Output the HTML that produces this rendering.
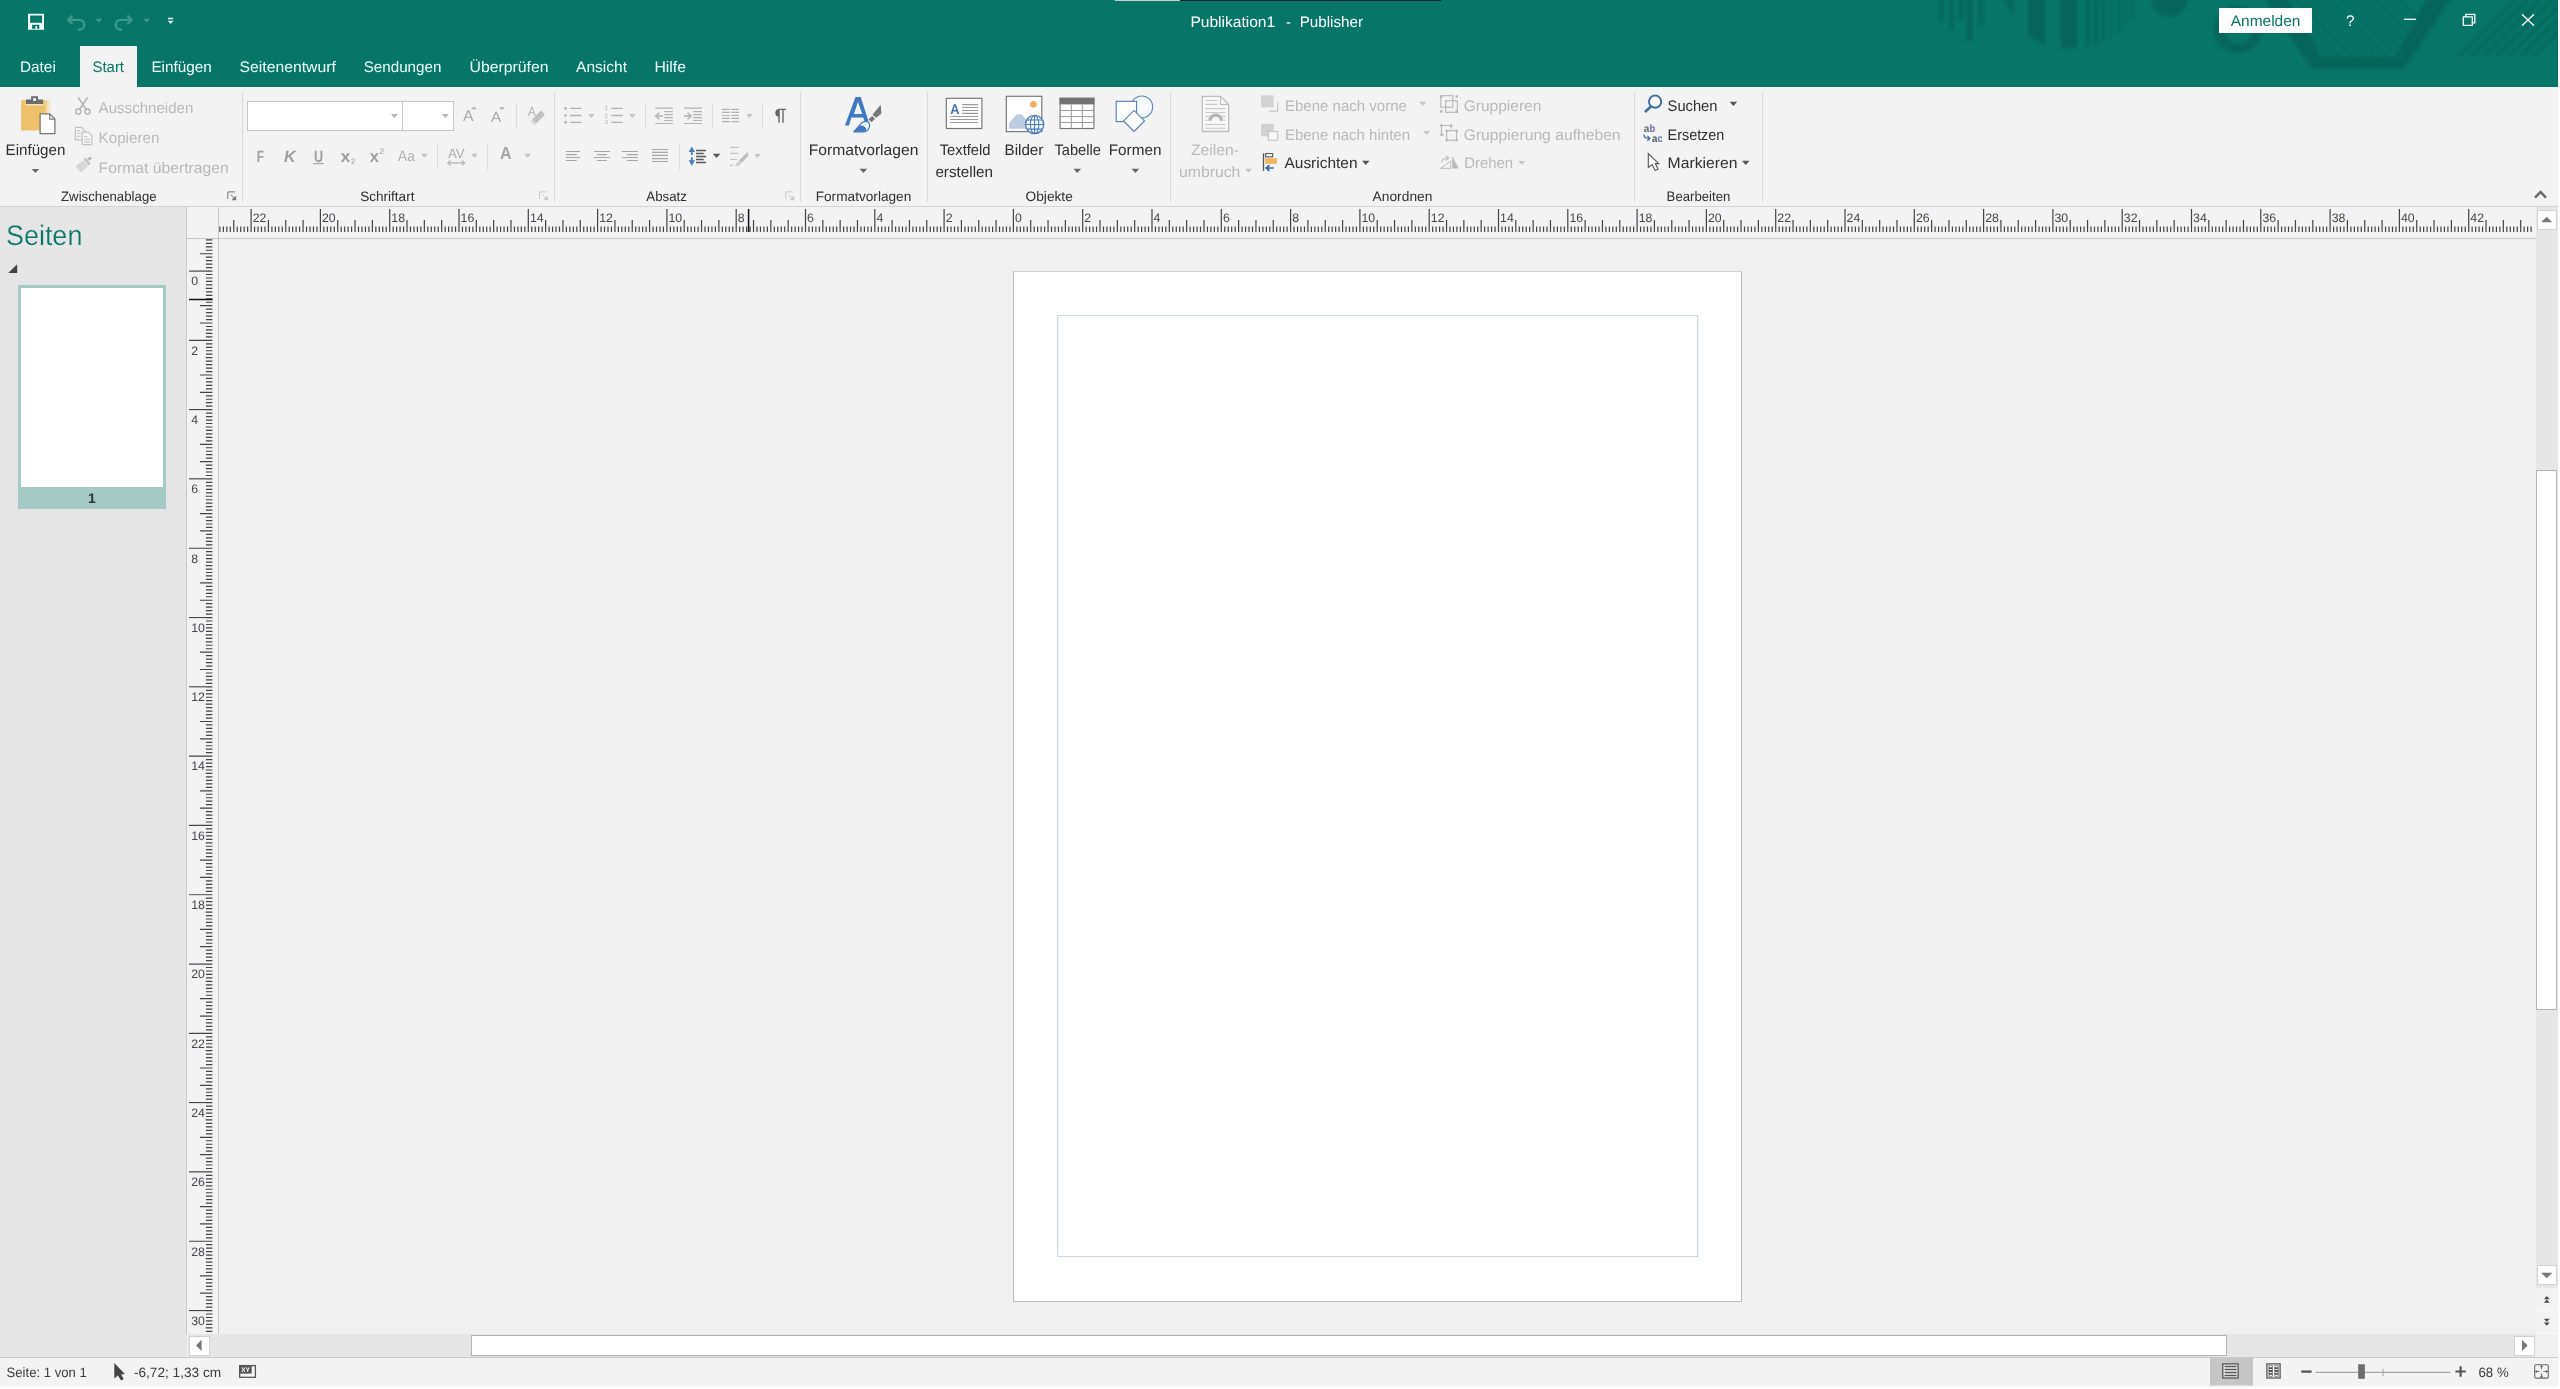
<!DOCTYPE html>
<html lang="de"><head><meta charset="utf-8"><title>Publikation1 - Publisher</title>
<style>
html,body{margin:0;padding:0;}
body{width:2560px;height:1389px;overflow:hidden;background:#fdfdfd;font-family:"Liberation Sans",sans-serif;position:relative;}
#app{position:absolute;left:0;top:0;width:2558px;height:1387px;overflow:hidden;background:#f0f0f0;}
.t{position:absolute;white-space:pre;line-height:1;transform-origin:0 0;}
.abs{position:absolute;}
svg{position:absolute;overflow:visible;}
#titlebar{position:absolute;left:0;top:0;width:2558px;height:87px;background:#077568;overflow:hidden;}
#ribbon{position:absolute;left:0;top:87px;width:2558px;height:119px;background:#f3f3f3;border-bottom:1px solid #d4d4d4;}
.gsep{position:absolute;top:92px;width:1.3px;height:110px;background:#d9d9d9;}
.ssep{position:absolute;width:1.3px;background:#dcdcdc;}
#pages{position:absolute;left:0;top:207px;width:187px;height:1150px;background:#e6e6e6;}
#status{position:absolute;left:0;top:1357px;width:2558px;height:30px;background:linear-gradient(#f3f3f3 0,#f3f3f3 27.3px,#fdfdfd 30px);border-top:1px solid #c9c9c9;box-sizing:border-box;}
.sbtn{position:absolute;background:#fff;border:1px solid #d2d2d2;box-sizing:border-box;}
</style></head><body><div id="app">

<div id="titlebar">
<svg width="2558" height="1387" viewBox="0 0 2558 1387" style="left:0;top:0;filter:blur(1.6px)"><rect x="1938.5" y="-2" width="5.3" height="22" fill="rgba(0,0,0,0.10)"/><rect x="1949.8" y="-2" width="4.0" height="32.5" fill="rgba(0,0,0,0.10)"/><rect x="1958.4" y="-2" width="5.3" height="22" fill="rgba(0,0,0,0.10)"/><rect x="1966.4" y="-2" width="6.0" height="43" fill="rgba(0,0,0,0.10)"/><rect x="1978" y="-2" width="5.7" height="27" fill="rgba(0,0,0,0.10)"/><path d="M2003 -2 L2014 -2 L2014 17 Z" fill="rgba(0,0,0,0.10)"/><path d="M2028 -2 H2044.8 V44.5 L2028 36 Z" fill="rgba(0,0,0,0.13)"/><path d="M2060.7 -2 H2077.3 V48.5 H2060.7 Z" fill="rgba(0,0,0,0.13)"/><rect x="2086" y="-2" width="4.0" height="48" fill="rgba(0,0,0,0.10)"/><rect x="2094" y="-2" width="4.0" height="47" fill="rgba(0,0,0,0.10)"/><rect x="2102" y="-2" width="3.0" height="42" fill="rgba(0,0,0,0.10)"/><rect x="2110" y="-2" width="2.5" height="39" fill="rgba(0,0,0,0.10)"/><rect x="2118" y="-2" width="2.5" height="34" fill="rgba(0,0,0,0.10)"/><rect x="2124.5" y="-2" width="2.5" height="27" fill="rgba(0,0,0,0.10)"/><rect x="2131" y="-2" width="2.0" height="20.6" fill="rgba(0,0,0,0.10)"/><circle cx="2169.6" cy="-2" r="18.6" fill="rgba(0,0,0,0.12)"/><circle cx="2238" cy="29.4" r="19" fill="none" stroke="rgba(0,0,0,0.12)" stroke-width="10"/><polygon points="2263,-3 2312.5,69 2404,69 2452,-3 2428,-3 2395,57 2321,57 2287,-3" fill="rgba(0,0,0,0.13)"/><defs><clipPath id="hexin"><polygon points="2287,-3 2321,57 2395,57 2428,-3"/></clipPath></defs><g clip-path="url(#hexin)"><path d="M2267.2 -3 l70 70 l5.7 0 l-70 -70 z" fill="rgba(0,0,0,0.06)"/><path d="M2278.6 -3 l70 70 l5.7 0 l-70 -70 z" fill="rgba(0,0,0,0.06)"/><path d="M2290.0 -3 l70 70 l5.7 0 l-70 -70 z" fill="rgba(0,0,0,0.06)"/><path d="M2301.4 -3 l70 70 l5.7 0 l-70 -70 z" fill="rgba(0,0,0,0.06)"/><path d="M2312.8 -3 l70 70 l5.7 0 l-70 -70 z" fill="rgba(0,0,0,0.06)"/><path d="M2324.2 -3 l70 70 l5.7 0 l-70 -70 z" fill="rgba(0,0,0,0.06)"/><path d="M2335.6 -3 l70 70 l5.7 0 l-70 -70 z" fill="rgba(0,0,0,0.06)"/><path d="M2347.0 -3 l70 70 l5.7 0 l-70 -70 z" fill="rgba(0,0,0,0.06)"/><path d="M2358.4 -3 l70 70 l5.7 0 l-70 -70 z" fill="rgba(0,0,0,0.06)"/><path d="M2369.8 -3 l70 70 l5.7 0 l-70 -70 z" fill="rgba(0,0,0,0.06)"/><path d="M2381.2 -3 l70 70 l5.7 0 l-70 -70 z" fill="rgba(0,0,0,0.06)"/><path d="M2392.6 -3 l70 70 l5.7 0 l-70 -70 z" fill="rgba(0,0,0,0.06)"/></g><path d="M2520.0 -2 l-58 58 l-6.5 0 l58 -58 z" fill="rgba(0,0,0,0.085)"/><path d="M2532.5 -2 l-58 58 l-6.5 0 l58 -58 z" fill="rgba(0,0,0,0.085)"/><path d="M2545.0 -2 l-58 58 l-6.5 0 l58 -58 z" fill="rgba(0,0,0,0.085)"/><path d="M2557.5 -2 l-58 58 l-6.5 0 l58 -58 z" fill="rgba(0,0,0,0.085)"/><path d="M2570.0 -2 l-58 58 l-6.5 0 l58 -58 z" fill="rgba(0,0,0,0.085)"/><path d="M2582.5 -2 l-58 58 l-6.5 0 l58 -58 z" fill="rgba(0,0,0,0.085)"/><path d="M2595.0 -2 l-58 58 l-6.5 0 l58 -58 z" fill="rgba(0,0,0,0.085)"/></svg>
<div class="abs" style="left:1115px;top:0;width:65px;height:1.2px;background:#c9cdd0"></div>
<div class="abs" style="left:1180px;top:0;width:261px;height:1.2px;background:#14222e"></div>
<div class="abs" id="starttab" style="left:80px;top:46px;width:57px;height:41px;background:#f3f3f3"></div>
<svg style="left:0;top:0" width="2558" height="1387" viewBox="0 0 2558 1387" ><path d="M28 13.8 H44 V29.8 H28 Z M30.1 15.4 V22.7 H42.1 V15.4 Z M32.1 24.8 V28.7 H35.5 V26 H37.1 V28.7 H39.3 V24.8 Z" fill="#f2fffc" fill-rule="evenodd"/><path d="M72.4 15.6 L68 19.8 L72.4 24 M68.4 19.8 H79.4 a4.9 4.9 0 0 1 0 9.8 H78" fill="none" stroke="#3c998b" stroke-width="2.2"/><path d="M95.3 18.8 h7 l-3.5 4 z" fill="#3c998b"/><path d="M127.4 15.6 L131.8 19.8 L127.4 24 M131.4 19.8 H120.6 a4.9 4.9 0 0 0 0 9.8 H122" fill="none" stroke="#3c998b" stroke-width="2.2"/><path d="M143.1 18.8 h7 l-3.5 4 z" fill="#3c998b"/><path d="M168 17.7 h5 v1.5 h-5z M167.8 20.7 h5.6 l-2.8 3.3z" fill="#f2fffc"/></svg>



<div class="abs" style="left:2219px;top:7.7px;width:93px;height:25.5px;background:#fff"></div>


<svg style="left:0;top:0" width="2558" height="1387" viewBox="0 0 2558 1387" ><path d="M2404 19.3 H2416" stroke="#fff" stroke-width="1.3" fill="none"/><path d="M2463.3 16.9 H2472.3 V25.4 H2463.3 Z M2465.8 16.9 V14.4 H2474.8 V22.9 H2472.3" stroke="#fff" stroke-width="1.3" fill="none"/><path d="M2522 14.2 L2534 25.8 M2534 14.2 L2522 25.8" stroke="#fff" stroke-width="1.3" fill="none"/></svg>








</div>
<div id="ribbon"></div>
<div class="gsep" style="left:241.9px"></div>
<div class="gsep" style="left:553.8px"></div>
<div class="gsep" style="left:799.9px"></div>
<div class="gsep" style="left:926.9px"></div>
<div class="gsep" style="left:1170.0px"></div>
<div class="gsep" style="left:1633.8px"></div>
<div class="gsep" style="left:1761.9px"></div>
<div class="ssep" style="left:516.0px;top:102.6px;height:26.5px"></div>
<div class="ssep" style="left:644.9px;top:102.6px;height:26.5px"></div>
<div class="ssep" style="left:712.1px;top:102.6px;height:26.5px"></div>
<div class="ssep" style="left:761.8px;top:102.6px;height:26.5px"></div>
<div class="ssep" style="left:437.0px;top:144px;height:25.6px"></div>
<div class="ssep" style="left:486.9px;top:144px;height:25.6px"></div>
<div class="ssep" style="left:678.7px;top:144px;height:25.6px"></div>




























<div class="abs" style="left:247px;top:101px;width:156px;height:29.5px;background:#fff;border:1.2px solid #c6c6c6;box-sizing:border-box"></div>
<div class="abs" style="left:402px;top:101px;width:52px;height:29.5px;background:#fff;border:1.2px solid #c6c6c6;box-sizing:border-box"></div>
<svg style="left:0;top:0" width="2558" height="1387" viewBox="0 0 2558 1387" ><defs><linearGradient id="pg" x1="0" x2="1" y1="0" y2="0"><stop offset="0" stop-color="#eec16a"/><stop offset="0.78" stop-color="#eec16a"/><stop offset="1" stop-color="#f6dcae" stop-opacity="0.2"/></linearGradient></defs><rect x="21.1" y="100.1" width="29.7" height="30.4" fill="url(#pg)"/><path d="M26 99.4H31.1V96.2H38V99.4H43V104.2H26Z" fill="#6b6b72"/><rect x="33.2" y="98.2" width="2.8" height="2.6" fill="#fff"/><rect x="25.4" y="104.2" width="18.2" height="1" fill="#fbefd6"/><path d="M40.1 113.9H49.7L54.9 119.1V133.7H40.1Z" fill="#fff" stroke="#787878" stroke-width="1.3"/><path d="M49.7 113.9V119.1H54.9" fill="none" stroke="#787878" stroke-width="1.1"/><path d="M31.6 168.9 h7.6 l-3.8 4.2 z" fill="#666"/><circle cx="78.3" cy="111.6" r="2.6" fill="none" stroke="#b2b2b2" stroke-width="1.3"/><circle cx="87.4" cy="111.6" r="2.6" fill="none" stroke="#b2b2b2" stroke-width="1.3"/><path d="M78.2 97.4 L86.2 109.4 M87.6 97.4 L79.6 109.4" stroke="#b2b2b2" stroke-width="1.6" fill="none"/><path d="M75.3 127.4H81.3L84.6 130.7V132 M75.3 127.4V139.8H82" fill="none" stroke="#c2c2c2" stroke-width="1.2"/><path d="M82.2 132.2H88.4L91.9 135.7V144.7H82.2Z" fill="#f6f6f6" stroke="#c2c2c2" stroke-width="1.2"/><path d="M77 130.5H80 M77 133.3H80.5 M77 136.2H80.5 M84.2 136.5H87.5 M84.2 139.2H90 M84.2 141.9H90" stroke="#c2c2c2" stroke-width="1.1" fill="none"/><path d="M75.5 166.5 L83 160.2 L88 166.2 L81 172.3 Z" fill="#d6d6d6"/><path d="M83.6 159.6 L88.4 165.6 L90.6 163.8 L85.8 157.8 Z" fill="#c4c4c4"/><path d="M87.4 158.6 L90.2 156.4 L92 158.6 L89.2 160.8 Z" fill="#b2b2b2"/><path d="M235.0 191.9H227.8V198.9" fill="none" stroke="#777" stroke-width="1"/><path d="M230.4 194.5L234.8 198.9" fill="none" stroke="#777" stroke-width="1"/><path d="M236.2 195.5V200.3H231.4Z" fill="#777"/><path d="M390.9 114.0 h7 l-3.5 3.9 z" fill="#b4b4b4"/><path d="M441.9 114.0 h7 l-3.5 3.9 z" fill="#b4b4b4"/><path d="M470.9 109.2 h6 l-3 -2.8z" fill="#b2b2b2"/><path d="M499 107.2 h6 l-3 2.8z" fill="#b2b2b2"/><path d="M531.9 119.6 L541 110.5 L544.9 114.7 L535.8 123.8 Z" fill="#c0c0c0"/><path d="M531 120.8 L534.8 124.8" stroke="#c9c9c9" stroke-width="1.2"/><path d="M420.9 153.8 h7 l-3.5 3.9 z" fill="#c6c6c6"/><path d="M470.9 153.8 h7 l-3.5 3.9 z" fill="#c6c6c6"/><path d="M524.0 153.8 h7 l-3.5 3.9 z" fill="#c6c6c6"/><path d="M312.9 163.6H323.8" stroke="#a6a6a6" stroke-width="1.2"/><path d="M448 162.9H464.4 M450.6 160.4L447.8 162.9L450.6 165.4 M461.8 160.4L464.6 162.9L461.8 165.4" fill="none" stroke="#b2b2b2" stroke-width="1.2"/><path d="M546.8 191.9H539.6V198.9" fill="none" stroke="#c9c9c9" stroke-width="1"/><path d="M542.2 194.5L546.6 198.9" fill="none" stroke="#c9c9c9" stroke-width="1"/><path d="M548.0 195.5V200.3H543.2Z" fill="#c9c9c9"/><circle cx="565.5" cy="108.4" r="1.3" fill="#b2b2b2"/><circle cx="565.5" cy="115.5" r="1.3" fill="#b2b2b2"/><circle cx="565.5" cy="122.4" r="1.3" fill="#b2b2b2"/><path d="M570.1 108.4H581.7M570.1 115.5H581.7M570.1 122.4H581.7" stroke="#b2b2b2" stroke-width="1.3"/><path d="M587.9 114.0 h7 l-3.5 3.9 z" fill="#c6c6c6"/><path d="M611.3 108.4H622.9M611.3 115.5H622.9M611.3 122.4H622.9" stroke="#b2b2b2" stroke-width="1.3"/><path d="M628.9 114.0 h7 l-3.5 3.9 z" fill="#c6c6c6"/><path d="M655.2 108.2H672.8 M655.2 123.5H672.8 M664.4 111.7H672.8 M664.4 114.7H672.8 M664.4 117.6H672.8 M664.4 120.5H672.8" stroke="#b2b2b2" stroke-width="1.2"/><path d="M663 115.9H656.4 M659.4 112.6L655.8 115.9L659.4 119.2" stroke="#b8b8b8" stroke-width="1.7" fill="none"/><path d="M684 108.2H702 M684 123.5H702 M693.2 111.7H702 M693.2 114.7H702 M693.2 117.6H702 M693.2 120.5H702" stroke="#b2b2b2" stroke-width="1.2"/><path d="M684 115.9H690.6 M687.6 112.6L691.2 115.9L687.6 119.2" stroke="#b8b8b8" stroke-width="1.7" fill="none"/><path d="M722.0 109.4H729.8M731.2 109.4H738.9M722.0 112.3H729.8M731.2 112.3H738.9M722.0 115.5H729.8M731.2 115.5H738.9M722.0 118.4H729.8M731.2 118.4H738.9M722.0 121.6H729.8M731.2 121.6H738.9" stroke="#b2b2b2" stroke-width="1.2"/><path d="M746.0 114.0 h7 l-3.5 3.9 z" fill="#c6c6c6"/><path d="M779.2 108.9 A3.9 3.9 0 0 0 779.2 116.7 Z" fill="#666"/><path d="M778.4 109.4H786 M779 109V122.8 M783 109V122.8" stroke="#666" stroke-width="1.4" fill="none"/><path d="M565.9 151.5H580.0M565.9 154.6H576.8M565.9 157.5H580.0M565.9 160.5H576.8" stroke="#a8a8a8" stroke-width="1.2"/><path d="M594.0 151.5H609.9M597.0 154.6H607.0M594.0 157.5H609.9M597.0 160.5H607.0" stroke="#a8a8a8" stroke-width="1.2"/><path d="M621.8 151.5H638.0M627.1 154.6H638.0M621.8 157.5H638.0M627.1 160.5H638.0" stroke="#a8a8a8" stroke-width="1.2"/><path d="M652.0 149.5H667.9M652.0 152.4H667.9M652.0 155.4H667.9M652.0 158.6H667.9M652.0 161.5H667.9" stroke="#a8a8a8" stroke-width="1.2"/><path d="M691.8 146.6L688.6 152H690.9V154.9H692.7V152H695Z M691.8 165.8L688.6 160.2H690.9V157.2H692.7V160.2H695Z" fill="#4a7ebb"/><path d="M696.0 150.6H706.0M696.0 153.5H703.7M696.0 156.6H706.0M696.0 159.6H703.7M696.0 162.6H706.0" stroke="#595959" stroke-width="1.5"/><path d="M712.8 153.8 h7.5 l-3.8 4.2 z" fill="#555"/><path d="M730 147.3H739 M730 153.3H738.5 M730 159.5H737 M730 165.3H733" stroke="#c2c2c2" stroke-width="1.2"/><path d="M748 151.8 L748.2 156 L741.5 163 L738.8 160.6 Z" fill="#bdbdbd"/><path d="M738.4 161.2 L741 163.6 C739.5 165.6 736.5 166 734.4 165.8 C736.2 164.6 737 163 738.4 161.2Z" fill="#c6c6c6"/><path d="M754.0 154.0 h7 l-3.5 3.9 z" fill="#c6c6c6"/><path d="M793.0 191.9H785.8V198.9" fill="none" stroke="#c9c9c9" stroke-width="1"/><path d="M788.4 194.5L792.8 198.9" fill="none" stroke="#c9c9c9" stroke-width="1"/><path d="M794.2 195.5V200.3H789.4Z" fill="#c9c9c9"/><path d="M855.5 97H860.7L868.6 121.6L864.6 121.6L863.2 117.4H851.4L848.9 125.6H844.9Z M858 101.9L853.9 113.9H862.3Z" fill="#3f78bf" fill-rule="evenodd"/><path d="M880.7 104.8L881.3 113.8L876.2 117.7L872.4 114.8Z" fill="#777"/><path d="M868.5 119.3L872.1 115.9L875 118.8L871.4 122.2Z" fill="#777"/><path d="M853.9 131.8C858.4 127.6 859.6 123.4 863.4 121.8C866.4 120.6 869.2 122 869.6 124.6C870 127.6 867.6 131.8 863.8 131.8Z" fill="#f4f8fc" stroke="#3f78bf" stroke-width="1.2" stroke-linejoin="round"/><path d="M853.9 131.8C857 129 858.6 127 860.2 125.6C863.2 125.4 865.6 126.8 866.4 129.2C865.8 130.6 865 131.6 863.8 131.8Z" fill="#3f78bf"/><path d="M859.6 168.7 h7.6 l-3.8 4.2 z" fill="#666"/><rect x="946.3" y="98.3" width="35.6" height="30.2" fill="#fff" stroke="#757575" stroke-width="1.15"/><path d="M962.2 104.6H978 M962.2 107.5H978 M962.2 110.5H978 M962.2 113.4H978 M950.2 116.5H978 M950.2 119.5H978 M950.2 122.5H978" stroke="#9a9a9a" stroke-width="1.2"/><rect x="1006.3" y="96.3" width="35.5" height="35.3" fill="#fff" stroke="#757575" stroke-width="1.15"/><path d="M1009.1 128.7V123L1016.8 114.3H1021.4L1030 123.4V128.7Z" fill="#bccde2"/><path d="M1033.4 100.7l3.2 1.85v3.7l-3.2 1.85l-3.2 -1.85v-3.7z" fill="#f3ab62"/><circle cx="1034.6" cy="124.5" r="9.1" fill="#f1f6fc" stroke="#4a7ab4" stroke-width="1.3"/><ellipse cx="1034.6" cy="124.5" rx="4.2" ry="9.1" fill="none" stroke="#4a7ab4" stroke-width="1.05"/><path d="M1034.6 115.4V133.6 M1025.5 124.5H1043.7 M1027 119.9H1042.2 M1027 129.1H1042.2" stroke="#4a7ab4" stroke-width="1.05" fill="none"/><rect x="1060.1" y="98.3" width="33.8" height="30.2" fill="#fff" stroke="#757575" stroke-width="1.15"/><rect x="1059.6" y="97.8" width="34.8" height="6.6" fill="#727272"/><path d="M1071.3 104.4V128.5 M1082.3 104.4V128.5 M1060.1 110.5H1093.9 M1060.1 116.6H1093.9 M1060.1 122.5H1093.9" stroke="#9a9a9a" stroke-width="1"/><path d="M1073.5 168.7 h7.6 l-3.8 4.2 z" fill="#666"/><circle cx="1141.8" cy="106.9" r="10.9" fill="#f7fbff" stroke="#5b8ac6" stroke-width="1.05"/><rect x="1116.2" y="101.3" width="20.4" height="20.3" fill="#fbfdff" stroke="#4a78b0" stroke-width="1.05"/><path d="M1134 110.4L1144.5 120.9L1134 131.4L1123.5 120.9Z" fill="#fbfdff" stroke="#5578b0" stroke-width="1.05"/><path d="M1131.6 168.7 h7.6 l-3.8 4.2 z" fill="#666"/><path d="M1202.3 96.3H1220.5L1228.7 104.5V131.5H1202.3Z" fill="#f7f7f7" stroke="#bdbdbd" stroke-width="1.3"/><path d="M1220.5 96.3V104.5H1228.7" fill="none" stroke="#bdbdbd" stroke-width="1.1"/><path d="M1205.5 100.5H1217.5 M1205.5 104.4H1217.5 M1205.5 108.6H1225.4 M1205.5 112.5H1225.4 M1205.5 116.4H1225.4 M1205.5 120.2H1225.4 M1205.5 124.5H1225.4 M1205.5 128.3H1225.4" stroke="#c9c9c9" stroke-width="1.1"/><path d="M1207.6 121.2 A8.1 8.1 0 0 1 1223.8 121.2Z" fill="#f7f7f7"/><path d="M1208.3 120.8 A7.4 7.4 0 0 1 1223.1 120.8 H1219.7 A4 4 0 0 0 1211.7 120.8Z" fill="#b4b4b4"/><path d="M1245.0 168.7 h7 l-3.5 3.9 z" fill="#c6c6c6"/><path d="M1268.8 111.1H1277.6V102.6" fill="none" stroke="#c6c6c6" stroke-width="1.2"/><rect x="1261" y="95.3" width="12.7" height="11.9" fill="#d2d2d2"/><rect x="1261" y="123.8" width="12.7" height="12.6" fill="#d2d2d2"/><rect x="1268.4" y="131.5" width="9.2" height="8.8" fill="#f7f7f7" stroke="#c6c6c6" stroke-width="1.2"/><path d="M1419.3 101.8 h7 l-3.5 3.9 z" fill="#c6c6c6"/><path d="M1423.1 130.9 h7 l-3.5 3.9 z" fill="#c6c6c6"/><path d="M1263.5 153.3V170.9" stroke="#555" stroke-width="1.3"/><rect x="1265.6" y="153.6" width="7" height="3.2" fill="#fff" stroke="#555" stroke-width="1.1"/><rect x="1265.1" y="158.2" width="11.8" height="5.6" fill="#f0b55c"/><path d="M1273.7 168H1266.6 M1269.4 165.2L1266.2 168L1269.4 170.8" stroke="#3465a8" stroke-width="1.7" fill="none"/><path d="M1362.0 160.8 h7.5 l-3.8 4.2 z" fill="#555"/><rect x="1440.8" y="95.7" width="12" height="11.5" fill="none" stroke="#b4b4b4" stroke-width="1.1"/><rect x="1445.7" y="100.7" width="11.6" height="11.6" fill="none" stroke="#b4b4b4" stroke-width="1.1"/><rect x="1440.1" y="95.3" width="2.4" height="2.4" fill="#b4b4b4"/><rect x="1455.5" y="95.3" width="2.4" height="2.4" fill="#b4b4b4"/><rect x="1440.1" y="110.2" width="2.4" height="2.4" fill="#b4b4b4"/><rect x="1455.5" y="110.2" width="2.4" height="2.4" fill="#b4b4b4"/><path d="M1441.5 134.7V125.5H1451.2V128.5 M1441.5 134.7H1444" fill="none" stroke="#b4b4b4" stroke-width="1.1"/><rect x="1446.7" y="130.7" width="9.9" height="9.5" fill="none" stroke="#b4b4b4" stroke-width="1.1"/><circle cx="1441.5" cy="125.5" r="1.3" fill="#b4b4b4"/><circle cx="1451.2" cy="125.5" r="1.3" fill="#b4b4b4"/><circle cx="1441.5" cy="134.7" r="1.3" fill="#b4b4b4"/><circle cx="1446.7" cy="130.7" r="1.3" fill="#b4b4b4"/><circle cx="1456.6" cy="130.7" r="1.3" fill="#b4b4b4"/><circle cx="1446.7" cy="140.2" r="1.3" fill="#b4b4b4"/><circle cx="1456.6" cy="140.2" r="1.3" fill="#b4b4b4"/><path d="M1440.4 168.4H1450.6V161.3Z" fill="none" stroke="#c6c6c6" stroke-width="1.1"/><path d="M1452.2 156.1V168.4H1458.7Z" fill="#bcbcbc"/><path d="M1441.6 162.4C1441.6 159.6 1444 158 1447.6 158 M1445.8 155.8L1448.6 158L1445.8 160.2" fill="none" stroke="#bcbcbc" stroke-width="1.2"/><path d="M1518.3 161.0 h7 l-3.5 3.9 z" fill="#c6c6c6"/><circle cx="1655.1" cy="101.7" r="6.1" fill="#fbfdff" stroke="#41719f" stroke-width="2"/><path d="M1651 106.6L1644.9 111.9" stroke="#41719f" stroke-width="2.7" fill="none"/><path d="M1729.7 101.7 h7.5 l-3.8 4.2 z" fill="#555"/><path d="M1643.9 134.4C1643.9 137.6 1645.6 138.4 1649.6 138.4 M1647.4 136L1650 138.4L1647.4 140.8" fill="none" stroke="#3a68a8" stroke-width="1.2"/><path d="M1648.3 153.5V167.4L1652.2 164.5L1655.1 170.4L1658 168.9L1655.3 163.6H1658.7Z" fill="#fff" stroke="#555" stroke-width="1.1" stroke-linejoin="miter"/><path d="M1742.0 160.8 h7.5 l-3.8 4.2 z" fill="#555"/></svg>
<div id="pages"></div>

<svg style="left:0;top:0" width="200" height="300"><path d="M17.2 264.2 L17.2 273 L8.2 273 Z" fill="#444"/></svg>
<div class="abs" style="left:18px;top:285px;width:148px;height:223.5px;background:#a3cac5"></div>
<div class="abs" style="left:21.3px;top:288px;width:142px;height:199px;background:#fff"></div>

<div class="abs" style="left:187px;top:207px;width:2349px;height:31.5px;background:#f3f3f3;border-bottom:1.2px solid #c8c8c8;box-sizing:border-box"></div>
<div class="abs" style="left:186.3px;top:207px;width:32.7px;height:1127px;background:#f3f3f3;border-left:1.3px solid #c8c8c8;border-right:1.2px solid #c8c8c8;box-sizing:border-box"></div>
<div class="abs" style="left:186.3px;top:207px;width:32.7px;height:31.5px;border:1.3px solid #c8c8c8;border-top:none;box-sizing:border-box"></div>

<svg style="left:0;top:0" width="2558" height="1387" viewBox="0 0 2558 1387" ><path d="M219.91 226.4V232M223.38 226.4V232M226.85 226.4V232M230.31 226.4V232M233.77 220V232M237.24 226.4V232M240.71 226.4V232M244.17 226.4V232M247.63 226.4V232M251.10 209V232M254.57 226.4V232M258.03 226.4V232M261.50 226.4V232M264.96 226.4V232M268.42 220V232M271.89 226.4V232M275.36 226.4V232M278.82 226.4V232M282.28 226.4V232M285.75 220V232M289.22 226.4V232M292.68 226.4V232M296.14 226.4V232M299.61 226.4V232M303.08 220V232M306.54 226.4V232M310.00 226.4V232M313.47 226.4V232M316.94 226.4V232M320.40 209V232M323.87 226.4V232M327.33 226.4V232M330.79 226.4V232M334.26 226.4V232M337.73 220V232M341.19 226.4V232M344.65 226.4V232M348.12 226.4V232M351.59 226.4V232M355.05 220V232M358.51 226.4V232M361.98 226.4V232M365.45 226.4V232M368.91 226.4V232M372.38 220V232M375.84 226.4V232M379.30 226.4V232M382.77 226.4V232M386.24 226.4V232M389.70 209V232M393.16 226.4V232M396.63 226.4V232M400.10 226.4V232M403.56 226.4V232M407.02 220V232M410.49 226.4V232M413.96 226.4V232M417.42 226.4V232M420.88 226.4V232M424.35 220V232M427.82 226.4V232M431.28 226.4V232M434.75 226.4V232M438.21 226.4V232M441.67 220V232M445.14 226.4V232M448.61 226.4V232M452.07 226.4V232M455.53 226.4V232M459.00 209V232M462.47 226.4V232M465.93 226.4V232M469.39 226.4V232M472.86 226.4V232M476.33 220V232M479.79 226.4V232M483.25 226.4V232M486.72 226.4V232M490.18 226.4V232M493.65 220V232M497.12 226.4V232M500.58 226.4V232M504.05 226.4V232M507.51 226.4V232M510.98 220V232M514.44 226.4V232M517.90 226.4V232M521.37 226.4V232M524.84 226.4V232M528.30 209V232M531.76 226.4V232M535.23 226.4V232M538.69 226.4V232M542.16 226.4V232M545.62 220V232M549.09 226.4V232M552.56 226.4V232M556.02 226.4V232M559.49 226.4V232M562.95 220V232M566.41 226.4V232M569.88 226.4V232M573.35 226.4V232M576.81 226.4V232M580.27 220V232M583.74 226.4V232M587.20 226.4V232M590.67 226.4V232M594.13 226.4V232M597.60 209V232M601.07 226.4V232M604.53 226.4V232M608.00 226.4V232M611.46 226.4V232M614.92 220V232M618.39 226.4V232M621.86 226.4V232M625.32 226.4V232M628.78 226.4V232M632.25 220V232M635.71 226.4V232M639.18 226.4V232M642.64 226.4V232M646.11 226.4V232M649.58 220V232M653.04 226.4V232M656.50 226.4V232M659.97 226.4V232M663.43 226.4V232M666.90 209V232M670.37 226.4V232M673.83 226.4V232M677.30 226.4V232M680.76 226.4V232M684.22 220V232M687.69 226.4V232M691.15 226.4V232M694.62 226.4V232M698.09 226.4V232M701.55 220V232M705.01 226.4V232M708.48 226.4V232M711.94 226.4V232M715.41 226.4V232M718.88 220V232M722.34 226.4V232M725.81 226.4V232M729.27 226.4V232M732.74 226.4V232M736.20 209V232M739.66 226.4V232M743.13 226.4V232M746.60 226.4V232M750.06 226.4V232M753.52 220V232M756.99 226.4V232M760.45 226.4V232M763.92 226.4V232M767.38 226.4V232M770.85 220V232M774.32 226.4V232M777.78 226.4V232M781.25 226.4V232M784.71 226.4V232M788.17 220V232M791.64 226.4V232M795.11 226.4V232M798.57 226.4V232M802.03 226.4V232M805.50 209V232M808.96 226.4V232M812.43 226.4V232M815.89 226.4V232M819.36 226.4V232M822.83 220V232M826.29 226.4V232M829.75 226.4V232M833.22 226.4V232M836.68 226.4V232M840.15 220V232M843.62 226.4V232M847.08 226.4V232M850.54 226.4V232M854.01 226.4V232M857.48 220V232M860.94 226.4V232M864.40 226.4V232M867.87 226.4V232M871.34 226.4V232M874.80 209V232M878.26 226.4V232M881.73 226.4V232M885.19 226.4V232M888.66 226.4V232M892.12 220V232M895.59 226.4V232M899.05 226.4V232M902.52 226.4V232M905.99 226.4V232M909.45 220V232M912.91 226.4V232M916.38 226.4V232M919.85 226.4V232M923.31 226.4V232M926.77 220V232M930.24 226.4V232M933.70 226.4V232M937.17 226.4V232M940.63 226.4V232M944.10 209V232M947.56 226.4V232M951.03 226.4V232M954.50 226.4V232M957.96 226.4V232M961.42 220V232M964.89 226.4V232M968.36 226.4V232M971.82 226.4V232M975.28 226.4V232M978.75 220V232M982.22 226.4V232M985.68 226.4V232M989.14 226.4V232M992.61 226.4V232M996.07 220V232M999.54 226.4V232M1003.00 226.4V232M1006.47 226.4V232M1009.93 226.4V232M1013.40 209V232M1016.87 226.4V232M1020.33 226.4V232M1023.79 226.4V232M1027.26 226.4V232M1030.72 220V232M1034.19 226.4V232M1037.65 226.4V232M1041.12 226.4V232M1044.59 226.4V232M1048.05 220V232M1051.51 226.4V232M1054.98 226.4V232M1058.44 226.4V232M1061.91 226.4V232M1065.38 220V232M1068.84 226.4V232M1072.31 226.4V232M1075.77 226.4V232M1079.23 226.4V232M1082.70 209V232M1086.16 226.4V232M1089.63 226.4V232M1093.10 226.4V232M1096.56 226.4V232M1100.03 220V232M1103.49 226.4V232M1106.95 226.4V232M1110.42 226.4V232M1113.88 226.4V232M1117.35 220V232M1120.82 226.4V232M1124.28 226.4V232M1127.74 226.4V232M1131.21 226.4V232M1134.67 220V232M1138.14 226.4V232M1141.61 226.4V232M1145.07 226.4V232M1148.53 226.4V232M1152.00 209V232M1155.46 226.4V232M1158.93 226.4V232M1162.39 226.4V232M1165.86 226.4V232M1169.33 220V232M1172.79 226.4V232M1176.25 226.4V232M1179.72 226.4V232M1183.18 226.4V232M1186.65 220V232M1190.12 226.4V232M1193.58 226.4V232M1197.05 226.4V232M1200.51 226.4V232M1203.97 220V232M1207.44 226.4V232M1210.90 226.4V232M1214.37 226.4V232M1217.84 226.4V232M1221.30 209V232M1224.76 226.4V232M1228.23 226.4V232M1231.69 226.4V232M1235.16 226.4V232M1238.62 220V232M1242.09 226.4V232M1245.56 226.4V232M1249.02 226.4V232M1252.48 226.4V232M1255.95 220V232M1259.41 226.4V232M1262.88 226.4V232M1266.35 226.4V232M1269.81 226.4V232M1273.28 220V232M1276.74 226.4V232M1280.20 226.4V232M1283.67 226.4V232M1287.13 226.4V232M1290.60 209V232M1294.07 226.4V232M1297.53 226.4V232M1300.99 226.4V232M1304.46 226.4V232M1307.92 220V232M1311.39 226.4V232M1314.86 226.4V232M1318.32 226.4V232M1321.78 226.4V232M1325.25 220V232M1328.71 226.4V232M1332.18 226.4V232M1335.64 226.4V232M1339.11 226.4V232M1342.58 220V232M1346.04 226.4V232M1349.50 226.4V232M1352.97 226.4V232M1356.43 226.4V232M1359.90 209V232M1363.37 226.4V232M1366.83 226.4V232M1370.30 226.4V232M1373.76 226.4V232M1377.22 220V232M1380.69 226.4V232M1384.15 226.4V232M1387.62 226.4V232M1391.09 226.4V232M1394.55 220V232M1398.01 226.4V232M1401.48 226.4V232M1404.94 226.4V232M1408.41 226.4V232M1411.88 220V232M1415.34 226.4V232M1418.80 226.4V232M1422.27 226.4V232M1425.73 226.4V232M1429.20 209V232M1432.66 226.4V232M1436.13 226.4V232M1439.60 226.4V232M1443.06 226.4V232M1446.53 220V232M1449.99 226.4V232M1453.45 226.4V232M1456.92 226.4V232M1460.38 226.4V232M1463.85 220V232M1467.32 226.4V232M1470.78 226.4V232M1474.24 226.4V232M1477.71 226.4V232M1481.17 220V232M1484.64 226.4V232M1488.11 226.4V232M1491.57 226.4V232M1495.03 226.4V232M1498.50 209V232M1501.96 226.4V232M1505.43 226.4V232M1508.89 226.4V232M1512.36 226.4V232M1515.82 220V232M1519.29 226.4V232M1522.75 226.4V232M1526.22 226.4V232M1529.68 226.4V232M1533.15 220V232M1536.62 226.4V232M1540.08 226.4V232M1543.55 226.4V232M1547.01 226.4V232M1550.47 220V232M1553.94 226.4V232M1557.40 226.4V232M1560.87 226.4V232M1564.34 226.4V232M1567.80 209V232M1571.26 226.4V232M1574.73 226.4V232M1578.19 226.4V232M1581.66 226.4V232M1585.12 220V232M1588.59 226.4V232M1592.05 226.4V232M1595.52 226.4V232M1598.98 226.4V232M1602.45 220V232M1605.91 226.4V232M1609.38 226.4V232M1612.84 226.4V232M1616.31 226.4V232M1619.78 220V232M1623.24 226.4V232M1626.70 226.4V232M1630.17 226.4V232M1633.63 226.4V232M1637.10 209V232M1640.57 226.4V232M1644.03 226.4V232M1647.49 226.4V232M1650.96 226.4V232M1654.42 220V232M1657.89 226.4V232M1661.36 226.4V232M1664.82 226.4V232M1668.28 226.4V232M1671.75 220V232M1675.21 226.4V232M1678.68 226.4V232M1682.14 226.4V232M1685.61 226.4V232M1689.07 220V232M1692.54 226.4V232M1696.01 226.4V232M1699.47 226.4V232M1702.93 226.4V232M1706.40 209V232M1709.86 226.4V232M1713.33 226.4V232M1716.80 226.4V232M1720.26 226.4V232M1723.72 220V232M1727.19 226.4V232M1730.65 226.4V232M1734.12 226.4V232M1737.59 226.4V232M1741.05 220V232M1744.51 226.4V232M1747.98 226.4V232M1751.44 226.4V232M1754.91 226.4V232M1758.38 220V232M1761.84 226.4V232M1765.30 226.4V232M1768.77 226.4V232M1772.23 226.4V232M1775.70 209V232M1779.16 226.4V232M1782.63 226.4V232M1786.09 226.4V232M1789.56 226.4V232M1793.03 220V232M1796.49 226.4V232M1799.95 226.4V232M1803.42 226.4V232M1806.88 226.4V232M1810.35 220V232M1813.82 226.4V232M1817.28 226.4V232M1820.74 226.4V232M1824.21 226.4V232M1827.67 220V232M1831.14 226.4V232M1834.61 226.4V232M1838.07 226.4V232M1841.53 226.4V232M1845.00 209V232M1848.46 226.4V232M1851.93 226.4V232M1855.39 226.4V232M1858.86 226.4V232M1862.32 220V232M1865.79 226.4V232M1869.26 226.4V232M1872.72 226.4V232M1876.18 226.4V232M1879.65 220V232M1883.11 226.4V232M1886.58 226.4V232M1890.05 226.4V232M1893.51 226.4V232M1896.97 220V232M1900.44 226.4V232M1903.90 226.4V232M1907.37 226.4V232M1910.84 226.4V232M1914.30 209V232M1917.76 226.4V232M1921.23 226.4V232M1924.69 226.4V232M1928.16 226.4V232M1931.62 220V232M1935.09 226.4V232M1938.55 226.4V232M1942.02 226.4V232M1945.48 226.4V232M1948.95 220V232M1952.41 226.4V232M1955.88 226.4V232M1959.34 226.4V232M1962.81 226.4V232M1966.28 220V232M1969.74 226.4V232M1973.20 226.4V232M1976.67 226.4V232M1980.13 226.4V232M1983.60 209V232M1987.07 226.4V232M1990.53 226.4V232M1993.99 226.4V232M1997.46 226.4V232M2000.92 220V232M2004.39 226.4V232M2007.86 226.4V232M2011.32 226.4V232M2014.78 226.4V232M2018.25 220V232M2021.71 226.4V232M2025.18 226.4V232M2028.64 226.4V232M2032.11 226.4V232M2035.57 220V232M2039.04 226.4V232M2042.51 226.4V232M2045.97 226.4V232M2049.43 226.4V232M2052.90 209V232M2056.36 226.4V232M2059.83 226.4V232M2063.30 226.4V232M2066.76 226.4V232M2070.22 220V232M2073.69 226.4V232M2077.15 226.4V232M2080.62 226.4V232M2084.09 226.4V232M2087.55 220V232M2091.01 226.4V232M2094.48 226.4V232M2097.94 226.4V232M2101.41 226.4V232M2104.88 220V232M2108.34 226.4V232M2111.80 226.4V232M2115.27 226.4V232M2118.74 226.4V232M2122.20 209V232M2125.66 226.4V232M2129.13 226.4V232M2132.59 226.4V232M2136.06 226.4V232M2139.53 220V232M2142.99 226.4V232M2146.45 226.4V232M2149.92 226.4V232M2153.38 226.4V232M2156.85 220V232M2160.32 226.4V232M2163.78 226.4V232M2167.24 226.4V232M2170.71 226.4V232M2174.17 220V232M2177.64 226.4V232M2181.11 226.4V232M2184.57 226.4V232M2188.03 226.4V232M2191.50 209V232M2194.97 226.4V232M2198.43 226.4V232M2201.89 226.4V232M2205.36 226.4V232M2208.82 220V232M2212.29 226.4V232M2215.76 226.4V232M2219.22 226.4V232M2222.68 226.4V232M2226.15 220V232M2229.61 226.4V232M2233.08 226.4V232M2236.55 226.4V232M2240.01 226.4V232M2243.47 220V232M2246.94 226.4V232M2250.40 226.4V232M2253.87 226.4V232M2257.34 226.4V232M2260.80 209V232M2264.26 226.4V232M2267.73 226.4V232M2271.19 226.4V232M2274.66 226.4V232M2278.12 220V232M2281.59 226.4V232M2285.05 226.4V232M2288.52 226.4V232M2291.99 226.4V232M2295.45 220V232M2298.91 226.4V232M2302.38 226.4V232M2305.84 226.4V232M2309.31 226.4V232M2312.78 220V232M2316.24 226.4V232M2319.70 226.4V232M2323.17 226.4V232M2326.63 226.4V232M2330.10 209V232M2333.57 226.4V232M2337.03 226.4V232M2340.49 226.4V232M2343.96 226.4V232M2347.42 220V232M2350.89 226.4V232M2354.36 226.4V232M2357.82 226.4V232M2361.28 226.4V232M2364.75 220V232M2368.22 226.4V232M2371.68 226.4V232M2375.14 226.4V232M2378.61 226.4V232M2382.07 220V232M2385.54 226.4V232M2389.01 226.4V232M2392.47 226.4V232M2395.93 226.4V232M2399.40 209V232M2402.86 226.4V232M2406.33 226.4V232M2409.80 226.4V232M2413.26 226.4V232M2416.72 220V232M2420.19 226.4V232M2423.65 226.4V232M2427.12 226.4V232M2430.59 226.4V232M2434.05 220V232M2437.51 226.4V232M2440.98 226.4V232M2444.44 226.4V232M2447.91 226.4V232M2451.38 220V232M2454.84 226.4V232M2458.30 226.4V232M2461.77 226.4V232M2465.24 226.4V232M2468.70 209V232M2472.16 226.4V232M2475.63 226.4V232M2479.09 226.4V232M2482.56 226.4V232M2486.03 220V232M2489.49 226.4V232M2492.95 226.4V232M2496.42 226.4V232M2499.88 226.4V232M2503.35 220V232M2506.82 226.4V232M2510.28 226.4V232M2513.74 226.4V232M2517.21 226.4V232M2520.67 220V232M2524.14 226.4V232M2527.61 226.4V232M2531.07 226.4V232" stroke="#444" stroke-width="1.2" fill="none"/><path d="M205.9 239.87H212.4M205.9 243.33H212.4M205.9 246.80H212.4M205.9 250.26H212.4M200 253.73H212.4M205.9 257.19H212.4M205.9 260.66H212.4M205.9 264.12H212.4M205.9 267.59H212.4M189 271.05H212.4M205.9 274.51H212.4M205.9 277.98H212.4M205.9 281.44H212.4M205.9 284.91H212.4M200 288.38H212.4M205.9 291.84H212.4M205.9 295.31H212.4M205.9 298.77H212.4M205.9 302.24H212.4M200 305.70H212.4M205.9 309.17H212.4M205.9 312.63H212.4M205.9 316.10H212.4M205.9 319.56H212.4M200 323.02H212.4M205.9 326.49H212.4M205.9 329.96H212.4M205.9 333.42H212.4M205.9 336.88H212.4M189 340.35H212.4M205.9 343.81H212.4M205.9 347.28H212.4M205.9 350.75H212.4M205.9 354.21H212.4M200 357.68H212.4M205.9 361.14H212.4M205.9 364.61H212.4M205.9 368.07H212.4M205.9 371.54H212.4M200 375.00H212.4M205.9 378.47H212.4M205.9 381.93H212.4M205.9 385.39H212.4M205.9 388.86H212.4M200 392.32H212.4M205.9 395.79H212.4M205.9 399.25H212.4M205.9 402.72H212.4M205.9 406.19H212.4M189 409.65H212.4M205.9 413.12H212.4M205.9 416.58H212.4M205.9 420.05H212.4M205.9 423.51H212.4M200 426.98H212.4M205.9 430.44H212.4M205.9 433.90H212.4M205.9 437.37H212.4M205.9 440.84H212.4M200 444.30H212.4M205.9 447.76H212.4M205.9 451.23H212.4M205.9 454.69H212.4M205.9 458.16H212.4M200 461.62H212.4M205.9 465.09H212.4M205.9 468.56H212.4M205.9 472.02H212.4M205.9 475.49H212.4M189 478.95H212.4M205.9 482.41H212.4M205.9 485.88H212.4M205.9 489.35H212.4M205.9 492.81H212.4M200 496.27H212.4M205.9 499.74H212.4M205.9 503.21H212.4M205.9 506.67H212.4M205.9 510.13H212.4M200 513.60H212.4M205.9 517.07H212.4M205.9 520.53H212.4M205.9 524.00H212.4M205.9 527.46H212.4M200 530.92H212.4M205.9 534.39H212.4M205.9 537.86H212.4M205.9 541.32H212.4M205.9 544.79H212.4M189 548.25H212.4M205.9 551.71H212.4M205.9 555.18H212.4M205.9 558.64H212.4M205.9 562.11H212.4M200 565.58H212.4M205.9 569.04H212.4M205.9 572.50H212.4M205.9 575.97H212.4M205.9 579.43H212.4M200 582.90H212.4M205.9 586.37H212.4M205.9 589.83H212.4M205.9 593.30H212.4M205.9 596.76H212.4M200 600.23H212.4M205.9 603.69H212.4M205.9 607.15H212.4M205.9 610.62H212.4M205.9 614.09H212.4M189 617.55H212.4M205.9 621.01H212.4M205.9 624.48H212.4M205.9 627.94H212.4M205.9 631.41H212.4M200 634.88H212.4M205.9 638.34H212.4M205.9 641.81H212.4M205.9 645.27H212.4M205.9 648.74H212.4M200 652.20H212.4M205.9 655.66H212.4M205.9 659.13H212.4M205.9 662.60H212.4M205.9 666.06H212.4M200 669.52H212.4M205.9 672.99H212.4M205.9 676.45H212.4M205.9 679.92H212.4M205.9 683.38H212.4M189 686.85H212.4M205.9 690.32H212.4M205.9 693.78H212.4M205.9 697.25H212.4M205.9 700.71H212.4M200 704.17H212.4M205.9 707.64H212.4M205.9 711.11H212.4M205.9 714.57H212.4M205.9 718.03H212.4M200 721.50H212.4M205.9 724.96H212.4M205.9 728.43H212.4M205.9 731.89H212.4M205.9 735.36H212.4M200 738.83H212.4M205.9 742.29H212.4M205.9 745.75H212.4M205.9 749.22H212.4M205.9 752.68H212.4M189 756.15H212.4M205.9 759.62H212.4M205.9 763.08H212.4M205.9 766.55H212.4M205.9 770.01H212.4M200 773.47H212.4M205.9 776.94H212.4M205.9 780.40H212.4M205.9 783.87H212.4M205.9 787.34H212.4M200 790.80H212.4M205.9 794.27H212.4M205.9 797.73H212.4M205.9 801.19H212.4M205.9 804.66H212.4M200 808.12H212.4M205.9 811.59H212.4M205.9 815.06H212.4M205.9 818.52H212.4M205.9 821.98H212.4M189 825.45H212.4M205.9 828.91H212.4M205.9 832.38H212.4M205.9 835.85H212.4M205.9 839.31H212.4M200 842.78H212.4M205.9 846.24H212.4M205.9 849.70H212.4M205.9 853.17H212.4M205.9 856.63H212.4M200 860.10H212.4M205.9 863.57H212.4M205.9 867.03H212.4M205.9 870.49H212.4M205.9 873.96H212.4M200 877.42H212.4M205.9 880.89H212.4M205.9 884.36H212.4M205.9 887.82H212.4M205.9 891.29H212.4M189 894.75H212.4M205.9 898.21H212.4M205.9 901.68H212.4M205.9 905.14H212.4M205.9 908.61H212.4M200 912.08H212.4M205.9 915.54H212.4M205.9 919.00H212.4M205.9 922.47H212.4M205.9 925.93H212.4M200 929.40H212.4M205.9 932.87H212.4M205.9 936.33H212.4M205.9 939.80H212.4M205.9 943.26H212.4M200 946.72H212.4M205.9 950.19H212.4M205.9 953.65H212.4M205.9 957.12H212.4M205.9 960.59H212.4M189 964.05H212.4M205.9 967.51H212.4M205.9 970.98H212.4M205.9 974.44H212.4M205.9 977.91H212.4M200 981.38H212.4M205.9 984.84H212.4M205.9 988.31H212.4M205.9 991.77H212.4M205.9 995.23H212.4M200 998.70H212.4M205.9 1002.16H212.4M205.9 1005.63H212.4M205.9 1009.10H212.4M205.9 1012.56H212.4M200 1016.03H212.4M205.9 1019.49H212.4M205.9 1022.95H212.4M205.9 1026.42H212.4M205.9 1029.88H212.4M189 1033.35H212.4M205.9 1036.82H212.4M205.9 1040.28H212.4M205.9 1043.74H212.4M205.9 1047.21H212.4M200 1050.67H212.4M205.9 1054.14H212.4M205.9 1057.61H212.4M205.9 1061.07H212.4M205.9 1064.54H212.4M200 1068.00H212.4M205.9 1071.46H212.4M205.9 1074.93H212.4M205.9 1078.39H212.4M205.9 1081.86H212.4M200 1085.33H212.4M205.9 1088.79H212.4M205.9 1092.25H212.4M205.9 1095.72H212.4M205.9 1099.18H212.4M189 1102.65H212.4M205.9 1106.12H212.4M205.9 1109.58H212.4M205.9 1113.05H212.4M205.9 1116.51H212.4M200 1119.97H212.4M205.9 1123.44H212.4M205.9 1126.90H212.4M205.9 1130.37H212.4M205.9 1133.84H212.4M200 1137.30H212.4M205.9 1140.76H212.4M205.9 1144.23H212.4M205.9 1147.69H212.4M205.9 1151.16H212.4M200 1154.62H212.4M205.9 1158.09H212.4M205.9 1161.56H212.4M205.9 1165.02H212.4M205.9 1168.48H212.4M189 1171.95H212.4M205.9 1175.41H212.4M205.9 1178.88H212.4M205.9 1182.35H212.4M205.9 1185.81H212.4M200 1189.27H212.4M205.9 1192.74H212.4M205.9 1196.20H212.4M205.9 1199.67H212.4M205.9 1203.13H212.4M200 1206.60H212.4M205.9 1210.07H212.4M205.9 1213.53H212.4M205.9 1216.99H212.4M205.9 1220.46H212.4M200 1223.92H212.4M205.9 1227.39H212.4M205.9 1230.86H212.4M205.9 1234.32H212.4M205.9 1237.79H212.4M189 1241.25H212.4M205.9 1244.71H212.4M205.9 1248.18H212.4M205.9 1251.64H212.4M205.9 1255.11H212.4M200 1258.58H212.4M205.9 1262.04H212.4M205.9 1265.50H212.4M205.9 1268.97H212.4M205.9 1272.43H212.4M200 1275.90H212.4M205.9 1279.37H212.4M205.9 1282.83H212.4M205.9 1286.30H212.4M205.9 1289.76H212.4M200 1293.22H212.4M205.9 1296.69H212.4M205.9 1300.15H212.4M205.9 1303.62H212.4M205.9 1307.08H212.4M189 1310.55H212.4M205.9 1314.01H212.4M205.9 1317.48H212.4M205.9 1320.94H212.4M205.9 1324.41H212.4M200 1327.88H212.4M205.9 1331.34H212.4" stroke="#444" stroke-width="1.2" fill="none"/><path d="M748.6 209V232 M189 299.4H212.6" stroke="#111" stroke-width="1.5" fill="none"/><rect x="188.8" y="271.9" width="16.9" height="18" fill="#f3f3f3"/><rect x="188.8" y="341.2" width="16.9" height="18" fill="#f3f3f3"/><rect x="188.8" y="410.5" width="16.9" height="18" fill="#f3f3f3"/><rect x="188.8" y="479.8" width="16.9" height="18" fill="#f3f3f3"/><rect x="188.8" y="549.1" width="16.9" height="18" fill="#f3f3f3"/><rect x="188.8" y="618.4" width="16.9" height="18" fill="#f3f3f3"/><rect x="188.8" y="687.7" width="16.9" height="18" fill="#f3f3f3"/><rect x="188.8" y="757.0" width="16.9" height="18" fill="#f3f3f3"/><rect x="188.8" y="826.4" width="16.9" height="18" fill="#f3f3f3"/><rect x="188.8" y="895.6" width="16.9" height="18" fill="#f3f3f3"/><rect x="188.8" y="964.9" width="16.9" height="18" fill="#f3f3f3"/><rect x="188.8" y="1034.2" width="16.9" height="18" fill="#f3f3f3"/><rect x="188.8" y="1103.5" width="16.9" height="18" fill="#f3f3f3"/><rect x="188.8" y="1172.9" width="16.9" height="18" fill="#f3f3f3"/><rect x="188.8" y="1242.2" width="16.9" height="18" fill="#f3f3f3"/><rect x="188.8" y="1311.5" width="16.9" height="18" fill="#f3f3f3"/></svg>
<div class="abs" style="left:1013px;top:271px;width:729px;height:1031px;background:#fff;border:1.1px solid #b9b9b9;border-top-color:#d2d2d2;box-sizing:border-box"></div>
<svg style="left:0;top:0" width="2558" height="1385"><rect x="1057.6" y="315.5" width="640" height="941" fill="none" stroke="#6c98c6" stroke-width="1.2" stroke-dasharray="1 1" opacity="0.75"/></svg>
<div class="abs" style="left:2536px;top:207px;width:21.5px;height:1080.5px;background:#e6e6e6"></div>
<div class="sbtn" style="left:2536.5px;top:209.5px;width:20px;height:20px"></div>
<div class="abs" style="left:2536px;top:470px;width:21px;height:540px;background:#fff;border:1.2px solid #b2b2b2;box-sizing:border-box"></div>
<div class="sbtn" style="left:2536.5px;top:1265px;width:20px;height:20px"></div>
<div class="abs" style="left:2536px;top:1287.5px;width:21.5px;height:46.5px;background:#f3f3f3"></div>
<div class="abs" style="left:2536px;top:1309.8px;width:21.5px;height:1.6px;background:#fafafa"></div>
<div class="abs" style="left:2536px;top:1332.6px;width:21.5px;height:1.4px;background:#f9f9f9"></div>
<div class="abs" style="left:2535px;top:1334px;width:23px;height:23px;background:#f0f0f0"></div>
<div class="abs" style="left:188px;top:1334px;width:2347px;height:23px;background:#e6e6e6"></div>
<div class="sbtn" style="left:189px;top:1335.5px;width:20.5px;height:20px"></div>
<div class="sbtn" style="left:2514.4px;top:1335.5px;width:20.5px;height:20px"></div>
<div class="abs" style="left:471.3px;top:1335px;width:1756.2px;height:20.5px;background:#fff;border:1.2px solid #b2b2b2;box-sizing:border-box"></div>
<svg style="left:0;top:0" width="2558" height="1387" viewBox="0 0 2558 1387" ><path d="M2541 222.3 h11.3 l-5.65 -5.6z" fill="#777"/><path d="M2541 1272.7 h11.3 l-5.65 5.6z" fill="#777"/><path d="M201.6 1339.8 v11.3 l-5.6 -5.65z" fill="#777"/><path d="M2522 1339.8 v11.3 l5.6 -5.65z" fill="#777"/><path d="M2543.9 1299.2 h5.8 l-2.9 -3.3z M2543.9 1302.8 h5.8 l-2.9 -3.3z" fill="#4a4a4a"/><path d="M2543.9 1318.8 h5.8 l-2.9 3.3z M2543.9 1322.4 h5.8 l-2.9 3.3z" fill="#4a4a4a"/><path d="M2535 197.6 L2540.5 192 L2546 197.6" stroke="#666" stroke-width="2.4" fill="none"/></svg>
<div id="status"></div>


<div class="abs" style="left:2210px;top:1358px;width:42.8px;height:29px;background:linear-gradient(#c6c6c6 0,#c6c6c6 26.5px,#fdfdfd 29px)"></div>

<svg style="left:0;top:0" width="2558" height="1387" viewBox="0 0 2558 1387" ><path d="M114.3 1363V1378.6L117.9 1375.6L121.2 1380.6L123.8 1378.9L121.1 1374.6L124.9 1374.1Z" fill="#444"/><rect x="239.7" y="1365.6" width="15.7" height="11.7" fill="#f7f7f7" stroke="#555" stroke-width="1.3"/><rect x="239.1" y="1365" width="12.6" height="8.6" fill="#555"/><rect x="2222.8" y="1363.9" width="15.3" height="14.1" fill="#efefef" stroke="#555" stroke-width="1.3"/><path d="M2224.6 1366.5H2236.6M2224.6 1369.5H2236.6M2224.6 1372.5H2236.6M2224.6 1375.5H2236.6" stroke="#555" stroke-width="1.3"/><rect x="2266.9" y="1363.9" width="13.2" height="14.1" fill="#fff" stroke="#555" stroke-width="1.3"/><rect x="2268.5" y="1365.4" width="4.2" height="11.2" fill="#555"/><rect x="2274.4" y="1365.4" width="4.2" height="11.2" fill="#555"/><path d="M2269.4 1366.6h2.4M2269.4 1369.5h2.4M2269.4 1372.5h2.4M2269.4 1375.4h2.4M2275.3 1366.6h2.4M2275.3 1369.5h2.4M2275.3 1372.5h2.4M2275.3 1375.4h2.4" stroke="#fff" stroke-width="1.2"/><path d="M2301.3 1371.6H2311.6" stroke="#555" stroke-width="2.3"/><path d="M2315.5 1372.4H2450.6" stroke="#a6a6a6" stroke-width="1.1"/><path d="M2383 1368.8V1376" stroke="#a6a6a6" stroke-width="1.1"/><rect x="2358.2" y="1364.3" width="6.7" height="14.5" fill="#6c6c6c"/><path d="M2455.4 1371.5H2465.8M2460.6 1366.3V1376.7" stroke="#555" stroke-width="2.2"/><rect x="2534.7" y="1364.8" width="13.6" height="13.3" rx="1.2" fill="#f5f5f5" stroke="#666" stroke-width="1.1"/><path d="M2541.5 1364.8V1369.4M2541.5 1373.4V1378.1M2534.7 1371.5H2539.6M2543.4 1371.5H2548.3" stroke="#6a6a6a" stroke-width="0.95"/><path d="M2540.1 1366.5H2542.9M2540.1 1376.4H2542.9M2536.4 1370.1V1372.9M2546.5 1370.1V1372.9" stroke="#6a6a6a" stroke-width="0.95"/></svg>
<svg id="labels" style="left:0;top:0" width="2558" height="1387" viewBox="0 0 2558 1387" font-family="'Liberation Sans', sans-serif" text-rendering="geometricPrecision" xml:space="preserve">
<text x="1190.4" y="26.7" font-size="15.3" fill="#fff" textLength="84.7" lengthAdjust="spacingAndGlyphs">Publikation1</text>
<text x="1286.0" y="26.7" font-size="15.3" fill="#fff" textLength="5.0" lengthAdjust="spacingAndGlyphs">-</text>
<text x="1299.7" y="26.7" font-size="15.3" fill="#fff" textLength="63.3" lengthAdjust="spacingAndGlyphs">Publisher</text>
<text x="2230.8" y="25.8" font-size="15.3" fill="#077568" textLength="69.6" lengthAdjust="spacingAndGlyphs">Anmelden</text>
<text x="2346.1" y="26.0" font-size="15.3" fill="#fff" textLength="8.5" lengthAdjust="spacingAndGlyphs">?</text>
<text x="20.0" y="72.0" font-size="15.3" fill="#effffc" textLength="35.8" lengthAdjust="spacingAndGlyphs">Datei</text>
<text x="92.5" y="72.0" font-size="15.3" fill="#077568" textLength="31.5" lengthAdjust="spacingAndGlyphs">Start</text>
<text x="151.4" y="72.0" font-size="15.3" fill="#effffc" textLength="60.4" lengthAdjust="spacingAndGlyphs">Einfügen</text>
<text x="239.6" y="72.0" font-size="15.3" fill="#effffc" textLength="96.2" lengthAdjust="spacingAndGlyphs">Seitenentwurf</text>
<text x="363.7" y="72.0" font-size="15.3" fill="#effffc" textLength="77.7" lengthAdjust="spacingAndGlyphs">Sendungen</text>
<text x="469.5" y="72.0" font-size="15.3" fill="#effffc" textLength="79.1" lengthAdjust="spacingAndGlyphs">Überprüfen</text>
<text x="576.1" y="72.0" font-size="15.3" fill="#effffc" textLength="50.9" lengthAdjust="spacingAndGlyphs">Ansicht</text>
<text x="654.4" y="72.0" font-size="15.3" fill="#effffc" textLength="31.6" lengthAdjust="spacingAndGlyphs">Hilfe</text>
<text x="5.6" y="155.0" font-size="15.3" fill="#2f2f2f" textLength="59.8" lengthAdjust="spacingAndGlyphs">Einfügen</text>
<text x="808.8" y="155.0" font-size="15.3" fill="#2f2f2f" textLength="109.6" lengthAdjust="spacingAndGlyphs">Formatvorlagen</text>
<text x="939.7" y="155.0" font-size="15.3" fill="#2f2f2f" textLength="50.8" lengthAdjust="spacingAndGlyphs">Textfeld</text>
<text x="935.4" y="176.7" font-size="15.3" fill="#2f2f2f" textLength="57.6" lengthAdjust="spacingAndGlyphs">erstellen</text>
<text x="1004.5" y="155.0" font-size="15.3" fill="#2f2f2f" textLength="38.9" lengthAdjust="spacingAndGlyphs">Bilder</text>
<text x="1054.4" y="155.0" font-size="15.3" fill="#2f2f2f" textLength="46.6" lengthAdjust="spacingAndGlyphs">Tabelle</text>
<text x="1108.8" y="155.0" font-size="15.3" fill="#2f2f2f" textLength="52.6" lengthAdjust="spacingAndGlyphs">Formen</text>
<text x="1190.9" y="155.0" font-size="15.3" fill="#b9b9b9" textLength="48.1" lengthAdjust="spacingAndGlyphs">Zeilen-</text>
<text x="1179.0" y="176.7" font-size="15.3" fill="#b9b9b9" textLength="61.4" lengthAdjust="spacingAndGlyphs">umbruch</text>
<text x="98.6" y="112.8" font-size="15.3" fill="#b9b9b9" textLength="94.8" lengthAdjust="spacingAndGlyphs">Ausschneiden</text>
<text x="98.6" y="142.7" font-size="15.3" fill="#b9b9b9" textLength="60.8" lengthAdjust="spacingAndGlyphs">Kopieren</text>
<text x="98.6" y="172.7" font-size="15.3" fill="#b9b9b9" textLength="130.1" lengthAdjust="spacingAndGlyphs">Format übertragen</text>
<text x="1284.9" y="110.7" font-size="15.3" fill="#b9b9b9" textLength="122.0" lengthAdjust="spacingAndGlyphs">Ebene nach vorne</text>
<text x="1284.9" y="139.5" font-size="15.3" fill="#b9b9b9" textLength="125.1" lengthAdjust="spacingAndGlyphs">Ebene nach hinten</text>
<text x="1284.5" y="168.3" font-size="15.3" fill="#2f2f2f" textLength="73.0" lengthAdjust="spacingAndGlyphs">Ausrichten</text>
<text x="1463.7" y="110.7" font-size="15.3" fill="#b9b9b9" textLength="77.7" lengthAdjust="spacingAndGlyphs">Gruppieren</text>
<text x="1463.7" y="139.5" font-size="15.3" fill="#b9b9b9" textLength="156.9" lengthAdjust="spacingAndGlyphs">Gruppierung aufheben</text>
<text x="1464.2" y="168.3" font-size="15.3" fill="#b9b9b9" textLength="48.8" lengthAdjust="spacingAndGlyphs">Drehen</text>
<text x="1667.6" y="110.7" font-size="15.3" fill="#2f2f2f" textLength="49.9" lengthAdjust="spacingAndGlyphs">Suchen</text>
<text x="1667.6" y="139.5" font-size="15.3" fill="#2f2f2f" textLength="56.7" lengthAdjust="spacingAndGlyphs">Ersetzen</text>
<text x="1667.6" y="168.3" font-size="15.3" fill="#2f2f2f" textLength="69.9" lengthAdjust="spacingAndGlyphs">Markieren</text>
<text x="61.0" y="200.5" font-size="13.7" fill="#2f2f2f" textLength="95.6" lengthAdjust="spacingAndGlyphs">Zwischenablage</text>
<text x="360.3" y="200.5" font-size="13.7" fill="#2f2f2f" textLength="54.1" lengthAdjust="spacingAndGlyphs">Schriftart</text>
<text x="646.3" y="200.5" font-size="13.7" fill="#2f2f2f" textLength="40.6" lengthAdjust="spacingAndGlyphs">Absatz</text>
<text x="815.7" y="200.5" font-size="13.7" fill="#2f2f2f" textLength="95.6" lengthAdjust="spacingAndGlyphs">Formatvorlagen</text>
<text x="1025.6" y="200.5" font-size="13.7" fill="#2f2f2f" textLength="47.2" lengthAdjust="spacingAndGlyphs">Objekte</text>
<text x="1372.6" y="200.5" font-size="13.7" fill="#2f2f2f" textLength="59.8" lengthAdjust="spacingAndGlyphs">Anordnen</text>
<text x="1666.6" y="200.5" font-size="13.7" fill="#2f2f2f" textLength="63.7" lengthAdjust="spacingAndGlyphs">Bearbeiten</text>
<text x="463.0" y="121.0" font-size="15.6" fill="#a8a8a8" textLength="10.5" lengthAdjust="spacingAndGlyphs">A</text>
<text x="491.1" y="121.7" font-size="14.8" fill="#a8a8a8" textLength="10.2" lengthAdjust="spacingAndGlyphs">A</text>
<text x="527.7" y="115.7" font-size="13.4" fill="#b4b4b4" textLength="8.1" lengthAdjust="spacingAndGlyphs">A</text>
<text x="256.8" y="161.7" font-size="16.4" fill="#9e9e9e" font-weight="bold" textLength="7.2" lengthAdjust="spacingAndGlyphs">F</text>
<text x="284.0" y="161.7" font-size="16.4" fill="#9e9e9e" font-weight="bold" font-style="italic" textLength="11.6" lengthAdjust="spacingAndGlyphs">K</text>
<text x="313.9" y="161.7" font-size="16.4" fill="#9e9e9e" font-weight="bold" textLength="9.1" lengthAdjust="spacingAndGlyphs">U</text>
<text x="340.6" y="161.7" font-size="16.6" fill="#9e9e9e" font-weight="bold" textLength="9.9" lengthAdjust="spacingAndGlyphs">x</text>
<text x="350.9" y="163.8" font-size="8" fill="#9e9e9e" textLength="4.1" lengthAdjust="spacingAndGlyphs">2</text>
<text x="369.8" y="161.7" font-size="16.6" fill="#9e9e9e" font-weight="bold" textLength="9.2" lengthAdjust="spacingAndGlyphs">x</text>
<text x="379.4" y="154.0" font-size="8" fill="#9e9e9e" textLength="4.6" lengthAdjust="spacingAndGlyphs">2</text>
<text x="398.0" y="160.8" font-size="15" fill="#b0b0b0" textLength="16.8" lengthAdjust="spacingAndGlyphs">Aa</text>
<text x="447.9" y="157.6" font-size="13.4" fill="#adadad" textLength="16.8" lengthAdjust="spacingAndGlyphs">AV</text>
<text x="499.9" y="159.3" font-size="17.3" fill="#a6a6a6" font-weight="bold" textLength="11.6" lengthAdjust="spacingAndGlyphs">A</text>
<text x="950.2" y="113.8" font-size="14.2" fill="#4a74b4" font-weight="bold" textLength="9.2" lengthAdjust="spacingAndGlyphs">A</text>
<text x="604.6" y="110.4" font-size="6.2" fill="#b2b2b2" textLength="3.4" lengthAdjust="spacingAndGlyphs">1</text>
<text x="604.6" y="117.5" font-size="6.2" fill="#b2b2b2" textLength="3.4" lengthAdjust="spacingAndGlyphs">2</text>
<text x="604.6" y="124.4" font-size="6.2" fill="#b2b2b2" textLength="3.4" lengthAdjust="spacingAndGlyphs">3</text>
<text x="1643.8" y="132.1" font-size="10.6" fill="#666" font-weight="bold" textLength="5.6" lengthAdjust="spacingAndGlyphs">a</text>
<text x="1649.6" y="132.1" font-size="10.6" fill="#7760b5" font-weight="bold" textLength="5.8" lengthAdjust="spacingAndGlyphs">b</text>
<text x="1651.9" y="141.5" font-size="10.6" fill="#555" font-weight="bold" textLength="5.4" lengthAdjust="spacingAndGlyphs">a</text>
<text x="1657.5" y="141.5" font-size="10.6" fill="#4a78b0" font-weight="bold" textLength="5.1" lengthAdjust="spacingAndGlyphs">c</text>
<text x="5.9" y="244.8" font-size="28.2" fill="#077568" textLength="76.5" lengthAdjust="spacingAndGlyphs" stroke="#e6e6e6" stroke-width="0.25">Seiten</text>
<text x="88.1" y="502.7" font-size="14" fill="#333" font-weight="bold" textLength="7.8" lengthAdjust="spacingAndGlyphs">1</text>
<text x="252.7" y="221.8" font-size="12.3" fill="#46464f">22</text>
<text x="322.0" y="221.8" font-size="12.3" fill="#46464f">20</text>
<text x="391.3" y="221.8" font-size="12.3" fill="#46464f">18</text>
<text x="460.6" y="221.8" font-size="12.3" fill="#46464f">16</text>
<text x="529.9" y="221.8" font-size="12.3" fill="#46464f">14</text>
<text x="599.2" y="221.8" font-size="12.3" fill="#46464f">12</text>
<text x="668.5" y="221.8" font-size="12.3" fill="#46464f">10</text>
<text x="737.8" y="221.8" font-size="12.3" fill="#46464f">8</text>
<text x="807.1" y="221.8" font-size="12.3" fill="#46464f">6</text>
<text x="876.4" y="221.8" font-size="12.3" fill="#46464f">4</text>
<text x="945.7" y="221.8" font-size="12.3" fill="#46464f">2</text>
<text x="1015.0" y="221.8" font-size="12.3" fill="#46464f">0</text>
<text x="1084.3" y="221.8" font-size="12.3" fill="#46464f">2</text>
<text x="1153.6" y="221.8" font-size="12.3" fill="#46464f">4</text>
<text x="1222.9" y="221.8" font-size="12.3" fill="#46464f">6</text>
<text x="1292.2" y="221.8" font-size="12.3" fill="#46464f">8</text>
<text x="1361.5" y="221.8" font-size="12.3" fill="#46464f">10</text>
<text x="1430.8" y="221.8" font-size="12.3" fill="#46464f">12</text>
<text x="1500.1" y="221.8" font-size="12.3" fill="#46464f">14</text>
<text x="1569.4" y="221.8" font-size="12.3" fill="#46464f">16</text>
<text x="1638.7" y="221.8" font-size="12.3" fill="#46464f">18</text>
<text x="1708.0" y="221.8" font-size="12.3" fill="#46464f">20</text>
<text x="1777.3" y="221.8" font-size="12.3" fill="#46464f">22</text>
<text x="1846.6" y="221.8" font-size="12.3" fill="#46464f">24</text>
<text x="1915.9" y="221.8" font-size="12.3" fill="#46464f">26</text>
<text x="1985.2" y="221.8" font-size="12.3" fill="#46464f">28</text>
<text x="2054.5" y="221.8" font-size="12.3" fill="#46464f">30</text>
<text x="2123.8" y="221.8" font-size="12.3" fill="#46464f">32</text>
<text x="2193.1" y="221.8" font-size="12.3" fill="#46464f">34</text>
<text x="2262.4" y="221.8" font-size="12.3" fill="#46464f">36</text>
<text x="2331.7" y="221.8" font-size="12.3" fill="#46464f">38</text>
<text x="2401.0" y="221.8" font-size="12.3" fill="#46464f">40</text>
<text x="2470.3" y="221.8" font-size="12.3" fill="#46464f">42</text>
<text x="191.2" y="285.2" font-size="12.3" fill="#46464f">0</text>
<text x="191.2" y="354.6" font-size="12.3" fill="#46464f">2</text>
<text x="191.2" y="423.8" font-size="12.3" fill="#46464f">4</text>
<text x="191.2" y="493.1" font-size="12.3" fill="#46464f">6</text>
<text x="191.2" y="562.5" font-size="12.3" fill="#46464f">8</text>
<text x="191.2" y="631.8" font-size="12.3" fill="#46464f">10</text>
<text x="191.2" y="701.0" font-size="12.3" fill="#46464f">12</text>
<text x="191.2" y="770.4" font-size="12.3" fill="#46464f">14</text>
<text x="191.2" y="839.7" font-size="12.3" fill="#46464f">16</text>
<text x="191.2" y="909.0" font-size="12.3" fill="#46464f">18</text>
<text x="191.2" y="978.2" font-size="12.3" fill="#46464f">20</text>
<text x="191.2" y="1047.5" font-size="12.3" fill="#46464f">22</text>
<text x="191.2" y="1116.8" font-size="12.3" fill="#46464f">24</text>
<text x="191.2" y="1186.2" font-size="12.3" fill="#46464f">26</text>
<text x="191.2" y="1255.5" font-size="12.3" fill="#46464f">28</text>
<text x="191.2" y="1324.8" font-size="12.3" fill="#46464f">30</text>
<text x="6.6" y="1376.8" font-size="13.6" fill="#3c3c3c" textLength="80.1" lengthAdjust="spacingAndGlyphs">Seite: 1 von 1</text>
<text x="133.9" y="1376.7" font-size="13.6" fill="#3c3c3c" textLength="87.3" lengthAdjust="spacingAndGlyphs">-6,72; 1,33 cm</text>
<text x="2478.5" y="1377.0" font-size="13.6" fill="#3c3c3c" textLength="30.2" lengthAdjust="spacingAndGlyphs">68 %</text>
<text x="241.2" y="1371.9" font-size="6.4" fill="#fff" font-weight="bold" textLength="8.7" lengthAdjust="spacingAndGlyphs">XY</text>
</svg>
</div></body></html>
